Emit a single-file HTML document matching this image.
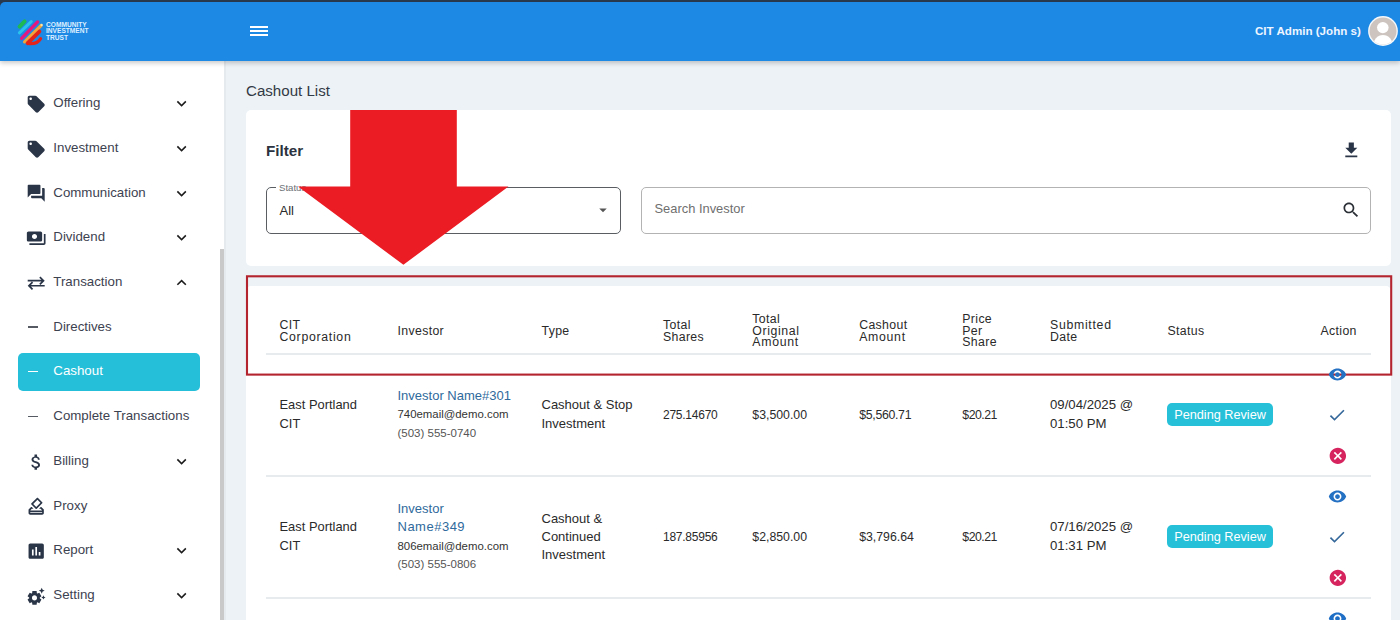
<!DOCTYPE html>
<html><head><meta charset="utf-8">
<style>
*{margin:0;padding:0;box-sizing:border-box}
html,body{width:1400px;height:620px;overflow:hidden;background:#edf2f6;font-family:"Liberation Sans",sans-serif;color:#333}
.abs{position:absolute}
.t{position:absolute;white-space:nowrap}
svg{display:block}
</style></head><body>
<div class="abs" style="left:225px;top:61px;width:1175px;height:559px;background:#edf2f6"></div>
<div class="t " style="left:246px;top:82px;font-size:15.1px;line-height:18px;color:#323a45;">Cashout List</div>
<div class="abs" style="left:245.5px;top:109.5px;width:1145.5px;height:156.5px;background:#fff;border-radius:5px"></div>
<div class="t " style="left:266px;top:142px;font-size:15.2px;line-height:18px;color:#2b3340;font-weight:700;">Filter</div>
<svg class="abs" style="left:1340.5px;top:139.8px;" width="20.6" height="20.6" viewBox="0 0 24 24"><path fill="#2a3547" d="M19 9h-4V3H9v6H5l7 7 7-7zM5 18v2h14v-2H5z"/></svg>
<div class="abs" style="left:266px;top:187px;width:354.5px;height:47px;border:1.2px solid #5a5e63;border-radius:5px"></div>
<div class="abs" style="left:276px;top:184px;width:40px;height:6px;background:#fff"></div>
<div class="t " style="left:279px;top:182px;font-size:9.6px;line-height:11px;color:#6b6f75;">Status</div>
<div class="t " style="left:279.5px;top:203px;font-size:13px;line-height:16px;color:#2a2a2a;">All</div>
<svg class="abs" style="left:594.25px;top:201.3px;" width="18" height="18" viewBox="0 0 24 24"><path fill="#555" d="M7 10l5 5 5-5z"/></svg>
<div class="abs" style="left:641px;top:187px;width:730px;height:47px;border:1.2px solid #b3b3b3;border-radius:5px"></div>
<div class="t " style="left:654.5px;top:201px;font-size:12.9px;line-height:16px;color:#6f6f6f;">Search Investor</div>
<svg class="abs" style="left:1340.5px;top:200.4px;" width="20" height="20" viewBox="0 0 24 24"><path fill="#2b2f36" d="M15.5 14h-.79l-.28-.27C15.41 12.59 16 11.11 16 9.5 16 5.910 13.09 3 9.5 3S3 5.91 3 9.5 5.91 16 9.5 16c1.61 0 3.09-.59 4.23-1.57l.27.28v.79l5 4.99L20.49 19l-4.99-5zm-6 0C7.01 14 5 11.99 5 9.5S7.01 5 9.5 5 14 7.01 14 9.5 11.99 14 9.5 14z"/></svg>
<div class="abs" style="left:245.5px;top:286px;width:1145.5px;height:400px;background:#fff;border-radius:5px"></div>
<div class="t " style="left:279.5px;top:317px;font-size:12.3px;line-height:16px;color:#2a2a2a;letter-spacing:0.35px;">CIT</div>
<div class="t " style="left:279.5px;top:329px;font-size:12.3px;line-height:16px;color:#2a2a2a;letter-spacing:0.7px;">Corporation</div>
<div class="t " style="left:397.5px;top:323px;font-size:12.3px;line-height:16px;color:#2a2a2a;letter-spacing:0.35px;">Investor</div>
<div class="t " style="left:541.5px;top:323px;font-size:12.3px;line-height:16px;color:#2a2a2a;letter-spacing:0.35px;">Type</div>
<div class="t " style="left:663px;top:317px;font-size:12.3px;line-height:16px;color:#2a2a2a;letter-spacing:0.35px;">Total</div>
<div class="t " style="left:663px;top:329px;font-size:12.3px;line-height:16px;color:#2a2a2a;letter-spacing:0.35px;">Shares</div>
<div class="t " style="left:752.3px;top:311px;font-size:12.3px;line-height:16px;color:#2a2a2a;letter-spacing:0.35px;">Total</div>
<div class="t " style="left:752.3px;top:323px;font-size:12.3px;line-height:16px;color:#2a2a2a;letter-spacing:0.6px;">Original</div>
<div class="t " style="left:752.3px;top:334px;font-size:12.3px;line-height:16px;color:#2a2a2a;letter-spacing:0.7px;">Amount</div>
<div class="t " style="left:859.2px;top:317px;font-size:12.3px;line-height:16px;color:#2a2a2a;letter-spacing:0.35px;">Cashout</div>
<div class="t " style="left:859.2px;top:329px;font-size:12.3px;line-height:16px;color:#2a2a2a;letter-spacing:0.7px;">Amount</div>
<div class="t " style="left:962.3px;top:311px;font-size:12.3px;line-height:16px;color:#2a2a2a;letter-spacing:0.35px;">Price</div>
<div class="t " style="left:962.3px;top:323px;font-size:12.3px;line-height:16px;color:#2a2a2a;letter-spacing:0.35px;">Per</div>
<div class="t " style="left:962.3px;top:334px;font-size:12.3px;line-height:16px;color:#2a2a2a;letter-spacing:0.35px;">Share</div>
<div class="t " style="left:1050px;top:317px;font-size:12.3px;line-height:16px;color:#2a2a2a;letter-spacing:0.7px;">Submitted</div>
<div class="t " style="left:1050px;top:329px;font-size:12.3px;line-height:16px;color:#2a2a2a;letter-spacing:0.35px;">Date</div>
<div class="t " style="left:1167.5px;top:323px;font-size:12.3px;line-height:16px;color:#2a2a2a;letter-spacing:0.35px;">Status</div>
<div class="t " style="left:1320.5px;top:323px;font-size:12.3px;line-height:16px;color:#2a2a2a;letter-spacing:0.35px;">Action</div>
<div class="abs" style="left:266px;top:353px;width:1105px;height:1.5px;background:#e8ebed"></div>
<div class="abs" style="left:266px;top:475px;width:1105px;height:1.5px;background:#e8ebed"></div>
<div class="abs" style="left:266px;top:597px;width:1105px;height:1.5px;background:#e8ebed"></div>
<div class="t " style="left:279.5px;top:396px;font-size:12.9px;line-height:18px;color:#2a2a2a;">East Portland</div>
<div class="t " style="left:279.5px;top:415px;font-size:12.9px;line-height:18px;color:#2a2a2a;">CIT</div>
<div class="t " style="left:397.5px;top:387px;font-size:13px;line-height:18px;color:#2f6a9c;">Investor Name#301</div>
<div class="t " style="left:397.5px;top:406px;font-size:11.4px;line-height:16px;color:#333;">740email@demo.com</div>
<div class="t " style="left:397.5px;top:425px;font-size:11.5px;line-height:16px;color:#555;">(503) 555-0740</div>
<div class="t " style="left:541.5px;top:396px;font-size:13px;line-height:18px;color:#2a2a2a;">Cashout &amp; Stop</div>
<div class="t " style="left:541.5px;top:415px;font-size:13px;line-height:18px;color:#2a2a2a;">Investment</div>
<div class="t " style="left:663px;top:406px;font-size:12.0px;line-height:18px;color:#2a2a2a;letter-spacing:-0.25px;">275.14670</div>
<div class="t " style="left:752.3px;top:406px;font-size:12.3px;line-height:18px;color:#2a2a2a;">$3,500.00</div>
<div class="t " style="left:859.2px;top:406px;font-size:12.3px;line-height:18px;color:#2a2a2a;letter-spacing:-0.3px;">$5,560.71</div>
<div class="t " style="left:962.3px;top:406px;font-size:12.3px;line-height:18px;color:#2a2a2a;letter-spacing:-0.5px;">$20.21</div>
<div class="t " style="left:1050px;top:396px;font-size:13.2px;line-height:18px;color:#2a2a2a;">09/04/2025 @</div>
<div class="t " style="left:1050px;top:415px;font-size:13.2px;line-height:18px;color:#2a2a2a;">01:50 PM</div>
<div class="abs" style="left:1166.7px;top:403px;width:106.2px;height:23.2px;background:#26c1d9;border-radius:5px"></div>
<div class="t " style="left:1174.2px;top:407px;font-size:12.7px;line-height:16px;color:#fff;">Pending Review</div>
<svg class="abs" style="left:1327.8px;top:365.4px;z-index:7;" width="19" height="19" viewBox="0 0 24 24"><path fill="#2470c2" d="M12 4.5C7 4.5 2.73 7.61 1 12c1.73 4.39 6 7.5 11 7.5s9.27-3.11 11-7.5c-1.73-4.39-6-7.5-11-7.5zM12 17c-2.76 0-5-2.24-5-5s2.24-5 5-5 5 2.24 5 5-2.24 5-5 5zm0-8c-1.66 0-3 1.34-3 3s1.34 3 3 3 3-1.34 3-3-1.34-3-3-3z"/></svg>
<svg class="abs" style="left:1327.4px;top:405.3px;" width="20" height="20" viewBox="0 0 24 24"><path fill="#34679a" d="M9 16.17L4.83 12l-1.42 1.41L9 19 21 7l-1.41-1.41z"/></svg>
<svg class="abs" style="left:1327.6px;top:445.8px;" width="19.7" height="19.7" viewBox="0 0 24 24"><path fill="#d6245f" d="M12 2C6.47 2 2 6.47 2 12s4.47 10 10 10 10-4.47 10-10S17.53 2 12 2zm5 13.59L15.59 17 12 13.41 8.41 17 7 15.59 10.59 12 7 8.41 8.41 7 12 10.590 15.59 7 17 8.41 13.41 12 17 15.59z"/></svg>
<div class="t " style="left:279.5px;top:518px;font-size:12.9px;line-height:18px;color:#2a2a2a;">East Portland</div>
<div class="t " style="left:279.5px;top:537px;font-size:12.9px;line-height:18px;color:#2a2a2a;">CIT</div>
<div class="t " style="left:397.5px;top:500px;font-size:13px;line-height:18px;color:#2f6a9c;">Investor</div>
<div class="t " style="left:397.5px;top:518px;font-size:13px;line-height:18px;color:#2f6a9c;letter-spacing:0.5px;">Name#349</div>
<div class="t " style="left:397.5px;top:538px;font-size:11.4px;line-height:16px;color:#333;">806email@demo.com</div>
<div class="t " style="left:397.5px;top:556px;font-size:11.5px;line-height:16px;color:#555;">(503) 555-0806</div>
<div class="t " style="left:541.5px;top:510px;font-size:13px;line-height:18px;color:#2a2a2a;">Cashout &amp;</div>
<div class="t " style="left:541.5px;top:528px;font-size:13px;line-height:18px;color:#2a2a2a;">Continued</div>
<div class="t " style="left:541.5px;top:546px;font-size:13px;line-height:18px;color:#2a2a2a;">Investment</div>
<div class="t " style="left:663px;top:528px;font-size:12.0px;line-height:18px;color:#2a2a2a;letter-spacing:-0.25px;">187.85956</div>
<div class="t " style="left:752.3px;top:528px;font-size:12.3px;line-height:18px;color:#2a2a2a;">$2,850.00</div>
<div class="t " style="left:859.2px;top:528px;font-size:12.3px;line-height:18px;color:#2a2a2a;">$3,796.64</div>
<div class="t " style="left:962.3px;top:528px;font-size:12.3px;line-height:18px;color:#2a2a2a;letter-spacing:-0.5px;">$20.21</div>
<div class="t " style="left:1050px;top:518px;font-size:13.2px;line-height:18px;color:#2a2a2a;">07/16/2025 @</div>
<div class="t " style="left:1050px;top:537px;font-size:13.2px;line-height:18px;color:#2a2a2a;">01:31 PM</div>
<div class="abs" style="left:1166.7px;top:525px;width:106.2px;height:23.2px;background:#26c1d9;border-radius:5px"></div>
<div class="t " style="left:1174.2px;top:529px;font-size:12.7px;line-height:16px;color:#fff;">Pending Review</div>
<svg class="abs" style="left:1327.8px;top:487.4px;z-index:7;" width="19" height="19" viewBox="0 0 24 24"><path fill="#2470c2" d="M12 4.5C7 4.5 2.73 7.61 1 12c1.73 4.39 6 7.5 11 7.5s9.27-3.11 11-7.5c-1.73-4.39-6-7.5-11-7.5zM12 17c-2.76 0-5-2.24-5-5s2.24-5 5-5 5 2.24 5 5-2.24 5-5 5zm0-8c-1.66 0-3 1.34-3 3s1.34 3 3 3 3-1.34 3-3-1.34-3-3-3z"/></svg>
<svg class="abs" style="left:1327.4px;top:527.3px;" width="20" height="20" viewBox="0 0 24 24"><path fill="#34679a" d="M9 16.17L4.83 12l-1.42 1.41L9 19 21 7l-1.41-1.41z"/></svg>
<svg class="abs" style="left:1327.6px;top:567.8px;" width="19.7" height="19.7" viewBox="0 0 24 24"><path fill="#d6245f" d="M12 2C6.47 2 2 6.47 2 12s4.47 10 10 10 10-4.47 10-10S17.53 2 12 2zm5 13.59L15.59 17 12 13.41 8.41 17 7 15.59 10.59 12 7 8.41 8.41 7 12 10.590 15.59 7 17 8.41 13.41 12 17 15.59z"/></svg>
<svg class="abs" style="left:1327.8px;top:609.4px;" width="19" height="19" viewBox="0 0 24 24"><path fill="#1f6fc6" d="M12 4.5C7 4.5 2.73 7.61 1 12c1.73 4.39 6 7.5 11 7.5s9.27-3.11 11-7.5c-1.73-4.39-6-7.5-11-7.5zM12 17c-2.76 0-5-2.24-5-5s2.24-5 5-5 5 2.24 5 5-2.24 5-5 5zm0-8c-1.66 0-3 1.34-3 3s1.34 3 3 3 3-1.34 3-3-1.34-3-3-3z"/></svg>
<svg class="abs" style="left:0;top:0;z-index:6" width="1400" height="620"><polygon points="350.2,110 456.8,110 456.8,186.5 508.5,186.5 403.4,264.8 298,186.5 350.2,186.5" fill="#ec1c24"/><rect x="247" y="276.3" width="1144.2" height="98.3" fill="none" stroke="#b3242f" stroke-width="2.1"/></svg>
<div class="abs" style="left:0;top:61px;width:224px;height:559px;background:#fff"></div>
<div class="abs" style="left:224px;top:61px;width:2px;height:559px;background:#e4eaee"></div>
<div class="abs" style="left:220px;top:249px;width:4px;height:371px;background:#c9c9c9"></div>
<div class="abs" style="left:17.5px;top:353.3px;width:182.5px;height:37.7px;background:#25bfda;border-radius:5px"></div>
<div class="t " style="left:53.3px;top:95px;font-size:13.3px;line-height:16px;color:#3d4250;">Offering</div>
<svg class="abs" style="left:25.9px;top:93.9px;" width="20.4" height="20.4" viewBox="0 0 24 24"><path fill="#2a3547" d="M21.41 11.58l-9-9C12.05 2.22 11.55 2 11 2H4c-1.1 0-2 .9-2 2v7c0 .55.22 1.05.59 1.42l9 9c.36.36.86.58 1.41.58.55 0 1.05-.22 1.41-.59l7-7c.37-.36.59-.86.59-1.41 0-.55-.23-1.06-.59-1.42zM5.5 7C4.67 7 4 6.33 4 5.5S4.670 4 5.5 4 7 4.67 7 5.5 6.33 7 5.5 7z"/></svg>
<svg class="abs" style="left:172px;top:94.30000000000001px;" width="19.2" height="19.2" viewBox="0 0 24 24"><path fill="#1c1c1c" d="M7.41 8.59L12 13.17l4.59-4.58L18 10l-6 6-6-6 1.41-1.41z"/></svg>
<div class="t " style="left:53.3px;top:140px;font-size:13.3px;line-height:16px;color:#3d4250;">Investment</div>
<svg class="abs" style="left:25.9px;top:138.60999999999999px;" width="20.4" height="20.4" viewBox="0 0 24 24"><path fill="#2a3547" d="M21.41 11.58l-9-9C12.05 2.22 11.55 2 11 2H4c-1.1 0-2 .9-2 2v7c0 .55.22 1.05.59 1.42l9 9c.36.36.86.58 1.41.58.55 0 1.05-.22 1.41-.59l7-7c.37-.36.59-.86.59-1.41 0-.55-.23-1.06-.59-1.42zM5.5 7C4.67 7 4 6.33 4 5.5S4.670 4 5.5 4 7 4.67 7 5.5 6.33 7 5.5 7z"/></svg>
<svg class="abs" style="left:172px;top:139.01px;" width="19.2" height="19.2" viewBox="0 0 24 24"><path fill="#1c1c1c" d="M7.41 8.59L12 13.17l4.59-4.58L18 10l-6 6-6-6 1.41-1.41z"/></svg>
<div class="t " style="left:53.3px;top:185px;font-size:13.3px;line-height:16px;color:#3d4250;">Communication</div>
<svg class="abs" style="left:25.9px;top:183.32px;" width="20.4" height="20.4" viewBox="0 0 24 24"><path fill="#2a3547" d="M21 6h-2v9H6v2c0 .55.45 1 1 1h11l4 4V7c0-.55-.45-1-1-1zm-4 6V3c0-.55-.45-1-1-1H3c-.55 0-1 .45-1 1v14l4-4h10c.55 0 1-.45 1-1z"/></svg>
<svg class="abs" style="left:172px;top:183.72px;" width="19.2" height="19.2" viewBox="0 0 24 24"><path fill="#1c1c1c" d="M7.41 8.59L12 13.17l4.59-4.58L18 10l-6 6-6-6 1.41-1.41z"/></svg>
<div class="t " style="left:53.3px;top:229px;font-size:13.3px;line-height:16px;color:#3d4250;">Dividend</div>
<svg class="abs" style="left:25.9px;top:228.02999999999997px;" width="20.4" height="20.4" viewBox="0 0 24 24"><path fill="#2a3547" d="M19 14V6c0-1.1-.9-2-2-2H3c-1.1 0-2 .9-2 2v8c0 1.1.9 2 2 2h14c1.1 0 2-.9 2-2zm-9-1c-1.66 0-3-1.34-3-3s1.34-3 3-3 3 1.34 3 3-1.34 3-3 3zm13-6v11c0 1.1-.9 2-2 2H4v-2h17V7h2z"/></svg>
<svg class="abs" style="left:172px;top:228.42999999999998px;" width="19.2" height="19.2" viewBox="0 0 24 24"><path fill="#1c1c1c" d="M7.41 8.59L12 13.17l4.59-4.58L18 10l-6 6-6-6 1.41-1.41z"/></svg>
<div class="t " style="left:53.3px;top:274px;font-size:13.3px;line-height:16px;color:#3d4250;">Transaction</div>
<svg class="abs" style="left:25.9px;top:272.74px;" width="20.4" height="20.4" viewBox="0 0 24 24"><path fill="#2a3547" d="M7 20l-5-5 5-5 1.4 1.45L5.85 14H22v2H5.85l2.55 2.55L7 20zm10-6l-1.4-1.45L18.150 10H2V8h16.15L15.6 5.45 17 4l5 5-5 5z"/></svg>
<svg class="abs" style="left:172px;top:273.14px;" width="19.2" height="19.2" viewBox="0 0 24 24"><path fill="#1c1c1c" d="M7.41 15.41L12 10.83l4.59 4.58L18 14l-6-6-6 6z"/></svg>
<div class="t " style="left:53.3px;top:319px;font-size:13.3px;line-height:16px;color:#3d4250;">Directives</div>
<div class="abs" style="left:28px;top:326.25px;width:9.6px;height:1.4px;background:#555a63"></div>
<div class="t " style="left:53.3px;top:363px;font-size:13.3px;line-height:16px;color:#fff;">Cashout</div>
<div class="abs" style="left:28px;top:370.96px;width:9.6px;height:1.4px;background:#fff"></div>
<div class="t " style="left:53.3px;top:408px;font-size:13.3px;line-height:16px;color:#3d4250;">Complete Transactions</div>
<div class="abs" style="left:28px;top:415.67px;width:9.6px;height:1.4px;background:#555a63"></div>
<div class="t " style="left:53.3px;top:453px;font-size:13.3px;line-height:16px;color:#3d4250;">Billing</div>
<svg class="abs" style="left:25.9px;top:451.58px;" width="20.4" height="20.4" viewBox="0 0 24 24"><path fill="#2a3547" d="M11.8 10.9c-2.27-.59-3-1.2-3-2.15 0-1.09 1.01-1.85 2.7-1.85 1.78 0 2.440.85 2.5 2.1h2.21c-.07-1.72-1.12-3.3-3.21-3.81V3h-3v2.16c-1.94.42-3.5 1.68-3.5 3.610 0 2.31 1.91 3.46 4.7 4.13 2.5.6 3 1.48 3 2.41 0 .69-.49 1.79-2.7 1.79-2.06 0-2.87-.92-2.98-2.1h-2.2c.12 2.19 1.76 3.42 3.68 3.83V21h3v-2.15c1.95-.37 3.5-1.5 3.5-3.55 0-2.84-2.43-3.81-4.7-4.4z"/></svg>
<svg class="abs" style="left:172px;top:451.97999999999996px;" width="19.2" height="19.2" viewBox="0 0 24 24"><path fill="#1c1c1c" d="M7.41 8.59L12 13.17l4.59-4.58L18 10l-6 6-6-6 1.41-1.41z"/></svg>
<div class="t " style="left:53.3px;top:498px;font-size:13.3px;line-height:16px;color:#3d4250;">Proxy</div>
<svg class="abs" style="left:25.9px;top:496.28999999999996px;" width="20.4" height="20.4" viewBox="0 0 24 24"><path fill="#2a3547" d="M18 13h-.68l-2 2h1.91L19 17H5l1.78-2h2.05l-2-2H6l-3 3v4c0 1.1.89 2 1.99 2H19c1.1 0 2-.89 2-2v-4l-3-3zm1 7H5v-1h14v1zm-7.66-4.98c.39.39 1.02.39 1.41 0l6.36-6.36c.39-.39.39-1.02 0-1.41L14.16 2.3c-.38-.4-1.01-.4-1.4-.01L6.39 8.66c-.39.39-.39 1.020 0 1.41l4.95 4.95zm2.12-10.61L16.99 7.9 12.04 12.85 8.5 9.32l4.96-4.91z"/></svg>
<div class="t " style="left:53.3px;top:542px;font-size:13.3px;line-height:16px;color:#3d4250;">Report</div>
<svg class="abs" style="left:25.9px;top:541.0000000000001px;" width="20.4" height="20.4" viewBox="0 0 24 24"><path fill="#2a3547" d="M19 3H5c-1.1 0-2 .9-2 2v14c0 1.1.9 2 2 2h14c1.1 0 2-.9 2-2V5c0-1.1-.9-2-2-2zM9 17H7v-7h2v7zm4 0h-2V7h2v10zm4 0h-2v-4h2v4z"/></svg>
<svg class="abs" style="left:172px;top:541.4000000000001px;" width="19.2" height="19.2" viewBox="0 0 24 24"><path fill="#1c1c1c" d="M7.41 8.59L12 13.17l4.59-4.58L18 10l-6 6-6-6 1.41-1.41z"/></svg>
<div class="t " style="left:53.3px;top:587px;font-size:13.3px;line-height:16px;color:#3d4250;">Setting</div>
<svg class="abs" style="left:25.9px;top:585.71px;" width="20.4" height="20.4" viewBox="0 0 24 24"><path fill="#2a3547" d="M17.41 6.59 15 5.5l2.41-1.09L18.5 2l1.09 2.41L22 5.5l-2.41 1.09L18.5 9l-1.09-2.41zm3.87 6.13L20.5 11l-.78 1.72-1.72.78 1.72.78.78 1.72.78-1.72L23 13.5l-1.72-.78zm-5.04 1.65 1.94 1.47-2.5 4.33-2.24-.94c-.2.13-.42.26-.64.37l-.3 2.4h-5l-.3-2.41c-.22-.11-.43-.23-.64-.37l-2.24.94-2.5-4.33 1.94-1.47c-.01-.11-.01-.24-.01-.37s0-.26.01-.37l-1.94-1.47 2.5-4.33 2.24.94c.2-.13.42-.26.64-.37L7.5 6h5l.3 2.41c.22.11.43.23.64.37l2.24-.94 2.5 4.33-1.94 1.47c.01.12.01.24.01.37s0 .24-.01.36zM13 14c0-1.66-1.34-3-3-3s-3 1.34-3 3 1.34 3 3 3 3-1.34 3-3z"/></svg>
<svg class="abs" style="left:172px;top:586.11px;" width="19.2" height="19.2" viewBox="0 0 24 24"><path fill="#1c1c1c" d="M7.41 8.59L12 13.17l4.59-4.58L18 10l-6 6-6-6 1.41-1.41z"/></svg>
<div class="abs" style="left:0;top:0;width:1400px;height:12px;background:#2a3a4e;z-index:9"></div>
<div class="abs" style="left:0;top:2px;width:1400px;height:59px;background:#1e88e5;border-top-left-radius:5px;box-shadow:0 2px 5px rgba(0,0,0,0.22);z-index:10"><svg class="abs" style="left:0;top:-2px" width="60" height="60" viewBox="0 0 60 60">
    <g stroke-linecap="round" fill="none">
      <line x1="19.6" y1="26.6" x2="24.6" y2="21.4" stroke="#1db954" stroke-width="4.0"/>
      <line x1="19.4" y1="32.8" x2="31.2" y2="21.6" stroke="#29c3ec" stroke-width="3.1"/>
      <line x1="21.6" y1="38.4" x2="37.6" y2="21.9" stroke="#e3197f" stroke-width="3.3"/>
      <line x1="24.6" y1="41.8" x2="41.0" y2="25.6" stroke="#f2a33a" stroke-width="3.3"/>
      <line x1="27.6" y1="43.2" x2="39.4" y2="31.6" stroke="#e3241b" stroke-width="3.8"/>
      <path d="M29 43.6 Q37 44.5 40.6 38.6" stroke="#e3241b" stroke-width="3.2"/>
      <circle cx="41.6" cy="25.0" r="1.2" fill="#f7e6a8"/>
    </g>
  </svg>
  <div class="abs" style="left:46px;top:19.6px;font-size:6.6px;line-height:6.6px;font-weight:700;color:#dcefff;letter-spacing:0">COMMUNITY<br>INVESTMENT<br>TRUST</div>
  <div class="abs" style="left:250px;top:24px;width:18px;height:2px;background:#fff"></div>
  <div class="abs" style="left:250px;top:28px;width:18px;height:2px;background:#fff"></div>
  <div class="abs" style="left:250px;top:32px;width:18px;height:2px;background:#fff"></div>
<div class="t " style="left:1255px;top:21px;font-size:11.6px;line-height:16px;color:#eef6ff;font-weight:700;">CIT Admin (John s)</div>
<svg class="abs" style="left:1368.3px;top:14.2px" width="30" height="30" viewBox="0 0 30 30">
    <defs><clipPath id="av"><circle cx="15" cy="15" r="13.5"/></clipPath></defs>
    <circle cx="15" cy="15" r="14.9" fill="#f4f8fb"/>
    <circle cx="15" cy="15" r="13.5" fill="#cdc4bf"/>
    <g clip-path="url(#av)" fill="#fff">
      <ellipse cx="14.8" cy="11.6" rx="5.8" ry="5.6"/>
      <ellipse cx="15" cy="30" rx="10" ry="11"/>
    </g>
  </svg>
</div>
</body></html>
